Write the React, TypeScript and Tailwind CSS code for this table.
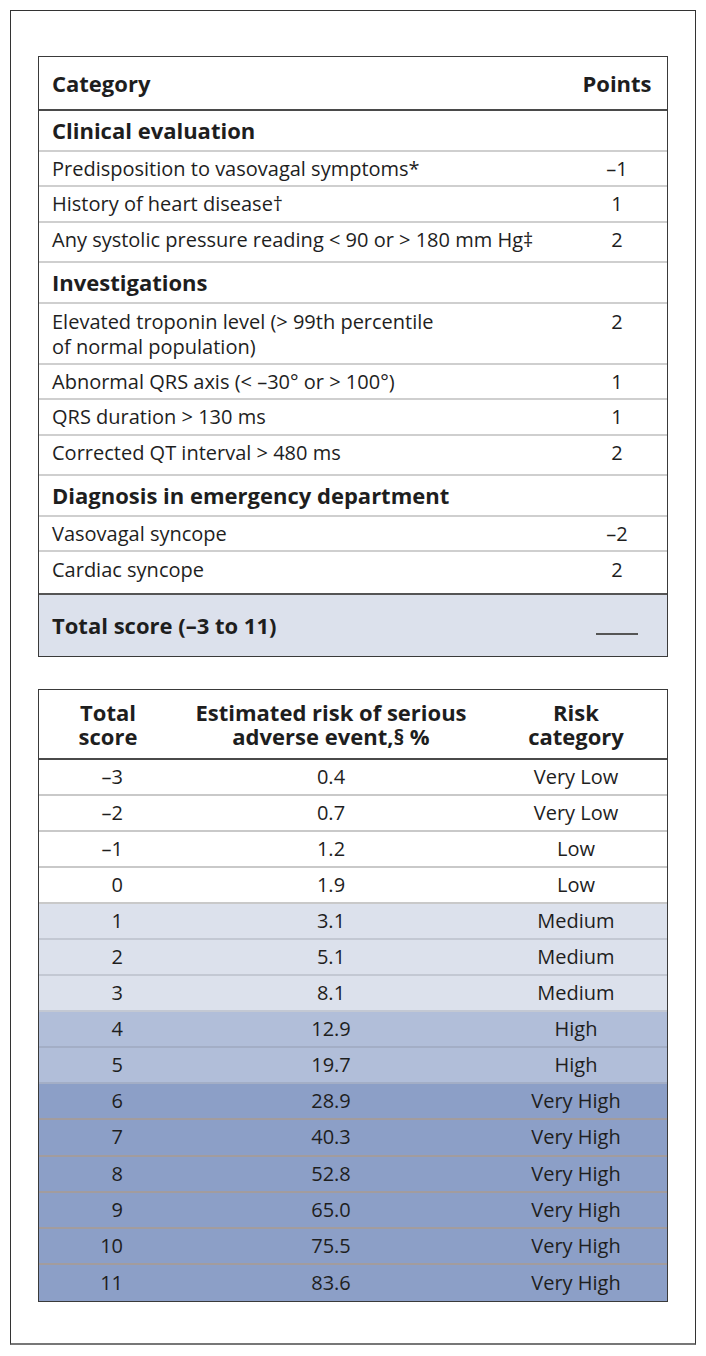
import React from "react";

type Item = { label: React.ReactNode; points: string; tall?: boolean };
type Section = { title: string; items: Item[] };

const SECTIONS: Section[] = [
  {
    title: "Clinical evaluation",
    items: [
      { label: "Predisposition to vasovagal symptoms*", points: "–1" },
      { label: "History of heart disease†", points: "1" },
      { label: "Any systolic pressure reading < 90 or > 180 mm Hg‡", points: "2" },
    ],
  },
  {
    title: "Investigations",
    items: [
      {
        label: (
          <>
            Elevated troponin level (&gt; 99th percentile
            <br />
            of normal population)
          </>
        ),
        points: "2",
        tall: true,
      },
      { label: "Abnormal QRS axis (< –30° or > 100°)", points: "1" },
      { label: "QRS duration > 130 ms", points: "1" },
      { label: "Corrected QT interval > 480 ms", points: "2" },
    ],
  },
  {
    title: "Diagnosis in emergency department",
    items: [
      { label: "Vasovagal syncope", points: "–2" },
      { label: "Cardiac syncope", points: "2" },
    ],
  },
];

type Risk = { score: string; pct: string; cat: string; tone: "white" | "medium" | "high" | "veryHigh" };

const RISKS: Risk[] = [
  { score: "–3", pct: "0.4", cat: "Very Low", tone: "white" },
  { score: "–2", pct: "0.7", cat: "Very Low", tone: "white" },
  { score: "–1", pct: "1.2", cat: "Low", tone: "white" },
  { score: "0", pct: "1.9", cat: "Low", tone: "white" },
  { score: "1", pct: "3.1", cat: "Medium", tone: "medium" },
  { score: "2", pct: "5.1", cat: "Medium", tone: "medium" },
  { score: "3", pct: "8.1", cat: "Medium", tone: "medium" },
  { score: "4", pct: "12.9", cat: "High", tone: "high" },
  { score: "5", pct: "19.7", cat: "High", tone: "high" },
  { score: "6", pct: "28.9", cat: "Very High", tone: "veryHigh" },
  { score: "7", pct: "40.3", cat: "Very High", tone: "veryHigh" },
  { score: "8", pct: "52.8", cat: "Very High", tone: "veryHigh" },
  { score: "9", pct: "65.0", cat: "Very High", tone: "veryHigh" },
  { score: "10", pct: "75.5", cat: "Very High", tone: "veryHigh" },
  { score: "11", pct: "83.6", cat: "Very High", tone: "veryHigh" },
];

// Row fill + the separator under it, per risk band.
const TONE: Record<Risk["tone"], string> = {
  white: "bg-white border-[#c9c9c9]",
  medium: "bg-[#dce1ec] border-[#c3c8d3]",
  high: "bg-[#b1bed9] border-[#a3aec6]",
  veryHigh: "bg-[#8c9fc7] border-[#a29c9e]",
};

function ScoreTable() {
  return (
    <div className="border border-[#3a3a3a] text-[20px] leading-[25px] text-[#1e1e1e]">
      <div className="flex h-[54px] items-center border-b-2 border-[#4a4a4a] text-[22px] font-bold">
        <div className="flex-1 pl-[13px]">Category</div>
        <div className="w-[100px] text-center">Points</div>
      </div>
      {SECTIONS.map((s) => (
        <div key={s.title}>
          <div className="flex h-[40.5px] items-center border-b-2 border-[#cfcfcf] pl-[13px] text-[22px] font-bold">
            {s.title}
          </div>
          {s.items.map((it, i) => {
            const last = i === s.items.length - 1;
            const isLastSection = s === SECTIONS[SECTIONS.length - 1];
            return (
              <div
                key={i}
                className={`flex border-[#cfcfcf] ${last && isLastSection ? "" : "border-b-2"} ${
                  it.tall
                    ? "h-[61px] pt-[5px]"
                    : last
                      ? "h-[40.5px] items-center pb-[5px]"
                      : "h-[35.5px] items-center"
                }`}
              >
                <div className="flex-1 pl-[13px]">{it.label}</div>
                <div className="w-[100px] text-center">{it.points}</div>
              </div>
            );
          })}
        </div>
      ))}
      <div className="flex h-[63px] items-center border-t-2 border-[#555] bg-[#dce1ec] text-[22px] font-bold">
        <div className="flex-1 pl-[13px]">Total score (–3 to 11)</div>
        <div className="flex w-[100px] justify-center pt-[18px]">
          <div className="h-[2px] w-[42px] bg-[#555]" />
        </div>
      </div>
    </div>
  );
}

function RiskTable() {
  return (
    <div className="border border-[#3a3a3a] text-[20px] text-[#1e1e1e]">
      <div className="flex h-[70px] items-center border-b-2 border-[#4a4a4a] text-center text-[22px] font-bold leading-[24px]">
        <div className="w-[138px]">
          Total
          <br />
          score
        </div>
        <div className="w-[308px]">
          Estimated risk of serious
          <br />
          adverse event,§ %
        </div>
        <div className="flex-1">
          Risk
          <br />
          category
        </div>
      </div>
      {RISKS.map((r, i) => (
        <div
          key={r.score}
          className={`flex h-[36.1px] items-center ${TONE[r.tone]} ${i < RISKS.length - 1 ? "border-b-2" : ""}`}
        >
          <div className="w-[84px] text-right">{r.score}</div>
          <div className="w-[54px]" />
          <div className="w-[308px] text-center">{r.pct}</div>
          <div className="flex-1 text-center">{r.cat}</div>
        </div>
      ))}
    </div>
  );
}

export default function App() {
  return (
    <div className="min-h-[1356px] bg-white p-[10px] font-['Open_Sans',sans-serif]">
      <div className="flex h-[1335px] w-[686px] flex-col gap-[32px] border border-b-2 border-[#333] border-b-[#777] px-[27px] pt-[45px]">
        <ScoreTable />
        <RiskTable />
      </div>
    </div>
  );
}
